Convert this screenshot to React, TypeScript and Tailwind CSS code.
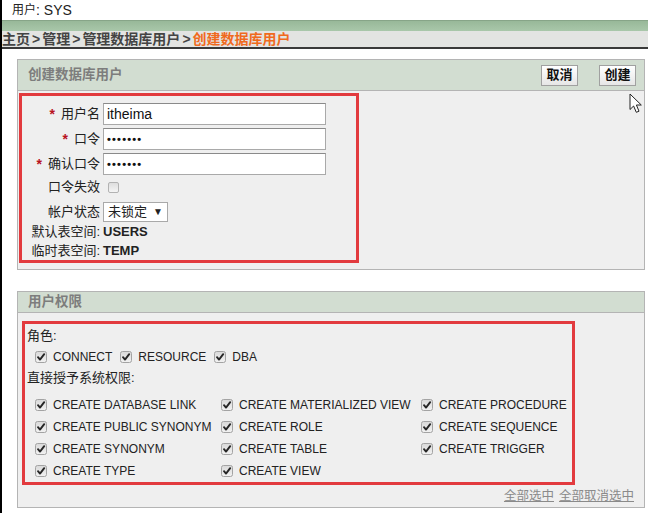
import React from "react";

// --- small pieces ---
function CheckBox({ checked = true }: { checked?: boolean }) {
  return (
    <svg width="12" height="12" viewBox="0 0 12 12" className="shrink-0">
      <defs>
        <linearGradient id="cbg" x1="0" y1="0" x2="0" y2="1">
          <stop offset="0" stopColor="#d9d9d9" />
          <stop offset="1" stopColor="#f2f2f2" />
        </linearGradient>
      </defs>
      <rect x="0.5" y="0.5" width="11" height="11" rx="2" fill="url(#cbg)" stroke="#a3a3a3" />
      {checked && (
        <path d="M3 6.2 L5 8.6 L9.2 3.2" fill="none" stroke="#262626" strokeWidth="1.9" strokeLinecap="round" strokeLinejoin="round" />
      )}
    </svg>
  );
}

function Priv({ label }: { label: string }) {
  return (
    <div className="flex items-center h-[22px]">
      <span className="ml-[4px] mr-[6px] flex"><CheckBox /></span>
      <span className="text-[12px] text-[#222]">{label}</span>
    </div>
  );
}

function Label({ star, children }: { star?: boolean; children: React.ReactNode }) {
  return (
    <div className="w-[78px] shrink-0 flex justify-end items-center text-[13px] text-[#222]">
      {star && <span className="text-[#b8121f] font-bold text-[14px] mr-[6px] leading-none">*</span>}
      {children}
    </div>
  );
}

function Field({ value, password }: { value?: string; password?: boolean }) {
  return (
    <div className="ml-[3px] w-[223px] h-[22px] bg-white border border-[#a9a9a9] border-t-[#8a8a8a] flex items-center pl-[3px]">
      {password ? (
        <span className="text-[11px] tracking-[1.2px] text-[#111] font-bold leading-none">•••••••</span>
      ) : (
        <span className="text-[14px] text-[#111]">{value}</span>
      )}
    </div>
  );
}

function Btn({ children }: { children: React.ReactNode }) {
  return (
    <div className="h-[21px] w-[37px] flex items-center justify-center border border-[#a0a0a0] bg-gradient-to-b from-white to-[#e6e6e6] text-[13px] font-bold text-[#111]">
      {children}
    </div>
  );
}

const privs = [
  "CREATE DATABASE LINK", "CREATE MATERIALIZED VIEW", "CREATE PROCEDURE",
  "CREATE PUBLIC SYNONYM", "CREATE ROLE", "CREATE SEQUENCE",
  "CREATE SYNONYM", "CREATE TABLE", "CREATE TRIGGER",
  "CREATE TYPE", "CREATE VIEW",
];

export default function App() {
  return (
    <div className="relative w-[648px] h-[513px] overflow-hidden bg-white border-l-2 border-black font-['Liberation_Sans','Noto_Sans_CJK_SC',sans-serif] text-[#222]">
      {/* top user line */}
      <div className="h-[20px] flex items-center pl-[10px]">
        <span className="text-[12px]">用户</span>
        <span className="text-[14px]">: SYS</span>
      </div>

      {/* green band */}
      <div className="h-[11px] border-t border-[#87a588] bg-gradient-to-b from-[#98b899] to-[#a9c7aa]" />

      {/* breadcrumb */}
      <div className="h-[18px] bg-[#e3e4e2] border-b-2 border-[#3a3a3a] flex items-center text-[14px] font-bold text-[#444] leading-none">
        <span>主页</span>
        <span className="px-[2px]">&gt;</span>
        <span>管理</span>
        <span className="px-[2px]">&gt;</span>
        <span>管理数据库用户</span>
        <span className="px-[2px]">&gt;</span>
        <span className="text-[#f06a1d]">创建数据库用户</span>
      </div>

      {/* panel: create user */}
      <div className="mt-[10px] ml-[15px] mr-[3px] border border-[#b4b4b4]">
        <div className="h-[31px] bg-[#d2ddd1] border-b border-[#b4b4b4] flex items-center pl-[10px] pr-[8px]">
          <span className="text-[13.5px] font-bold text-[#7d7d7d]">创建数据库用户</span>
          <div className="ml-auto flex gap-[21px]">
            <Btn>取消</Btn>
            <Btn>创建</Btn>
          </div>
        </div>
        <div className="bg-[#efefef] pt-[2px] pb-[6px] pl-[1px]">
          <div className="w-[340px] border-[3px] border-[#e23a3e] pt-[7px]">
            <div className="flex flex-col gap-[3px]">
              <div className="flex items-center">
                <Label star>用户名</Label>
                <Field value="itheima" />
              </div>
              <div className="flex items-center">
                <Label star>口令</Label>
                <Field password />
              </div>
              <div className="flex items-center">
                <Label star>确认口令</Label>
                <Field password />
              </div>
            </div>
            <div className="flex items-center h-[24px]">
              <Label>口令失效</Label>
              <span className="ml-[8px] w-[11px] h-[11px] rounded-[2px] border border-[#b2b2b2] bg-gradient-to-b from-[#dedede] to-[#f4f4f4]" />
            </div>
            <div className="flex items-center h-[20px] mt-[3px]">
              <Label>帐户状态</Label>
              <div className="ml-[3px] w-[65px] h-[20px] bg-white border border-[#a9a9a9] flex items-center pl-[4px] text-[13px]">
                <span>未锁定</span>
                <span className="ml-[6px] text-[10px] leading-none">▼</span>
              </div>
            </div>
            <div className="flex items-center h-[19px]">
              <Label>默认表空间:</Label>
              <span className="ml-[3px] text-[13px] font-bold">USERS</span>
            </div>
            <div className="flex items-center h-[19px]">
              <Label>临时表空间:</Label>
              <span className="ml-[3px] text-[13px] font-bold">TEMP</span>
            </div>
          </div>
        </div>
      </div>

      {/* panel: privileges */}
      <div className="mt-[21px] ml-[15px] mr-[3px] border border-[#b4b4b4]">
        <div className="h-[21px] bg-[#d2ddd1] border-b border-[#b4b4b4] flex items-center pl-[10px]">
          <span className="text-[13.5px] font-bold text-[#7d7d7d]">用户权限</span>
        </div>
        <div className="bg-[#efefef] pt-[8px] pl-[4px]">
          <div className="w-[553px] border-[3px] border-[#e23a3e] pt-[2px] pl-[2px]">
            <div className="h-[20px] flex items-center text-[13px]">角色:</div>
            <div className="h-[21px] flex items-center pl-[4px] gap-[4px]">
              <Priv label="CONNECT" />
              <Priv label="RESOURCE" />
              <Priv label="DBA" />
            </div>
            <div className="h-[21px] flex items-center text-[13px]">直接授予系统权限:</div>
            <div className="mt-[6px] pl-[4px] grid grid-cols-[186px_200px_auto]">
              {privs.map((p) => (
                <Priv key={p} label={p} />
              ))}
            </div>
          </div>
          <div className="h-[22px] flex items-center justify-end pr-[10px] gap-[5px] text-[12.5px] text-[#8a8a8a]">
            <span className="underline">全部选中</span>
            <span className="underline">全部取消选中</span>
          </div>
        </div>
      </div>

      {/* mouse pointer captured in the shot */}
      <svg className="absolute left-[627px] top-[93px]" width="14" height="21" viewBox="0 0 14 21">
        <path d="M1 1 L1 16.5 L4.6 13 L7.3 19.3 L10 18.2 L7.4 12 L12.3 12 Z" fill="#fff" stroke="#222" strokeWidth="1" strokeLinejoin="round" />
      </svg>
    </div>
  );
}
